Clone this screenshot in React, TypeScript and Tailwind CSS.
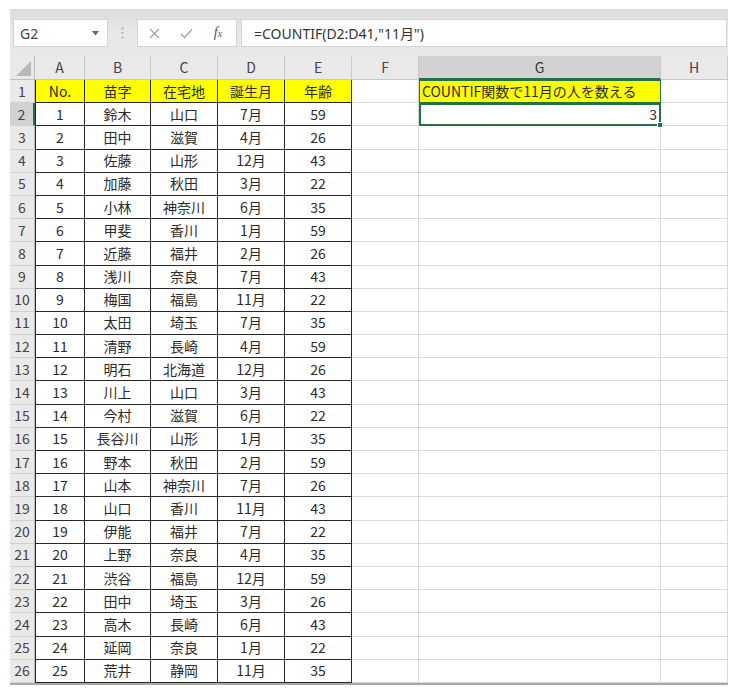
import React from "react";

const rows: [string, string, string, string, string][] = [
  ["1", "鈴木", "山口", "7月", "59"],
  ["2", "田中", "滋賀", "4月", "26"],
  ["3", "佐藤", "山形", "12月", "43"],
  ["4", "加藤", "秋田", "3月", "22"],
  ["5", "小林", "神奈川", "6月", "35"],
  ["6", "甲斐", "香川", "1月", "59"],
  ["7", "近藤", "福井", "2月", "26"],
  ["8", "浅川", "奈良", "7月", "43"],
  ["9", "梅国", "福島", "11月", "22"],
  ["10", "太田", "埼玉", "7月", "35"],
  ["11", "清野", "長崎", "4月", "59"],
  ["12", "明石", "北海道", "12月", "26"],
  ["13", "川上", "山口", "3月", "43"],
  ["14", "今村", "滋賀", "6月", "22"],
  ["15", "長谷川", "山形", "1月", "35"],
  ["16", "野本", "秋田", "2月", "59"],
  ["17", "山本", "神奈川", "7月", "26"],
  ["18", "山口", "香川", "11月", "43"],
  ["19", "伊能", "福井", "7月", "22"],
  ["20", "上野", "奈良", "4月", "35"],
  ["21", "渋谷", "福島", "12月", "59"],
  ["22", "田中", "埼玉", "3月", "26"],
  ["23", "高木", "長崎", "6月", "43"],
  ["24", "延岡", "奈良", "1月", "22"],
  ["25", "荒井", "静岡", "11月", "35"],
];

const widths = ["w-[50px]", "w-[66px]", "w-[67px]", "w-[67px]", "w-[67px]"];
const font = "font-['Noto_Sans_CJK_JP','Noto_Sans',sans-serif]";

function RowHeader({ n, active }: { n: number; active?: boolean }) {
  return (
    <div
      className={`w-[25px] shrink-0 flex items-center justify-center text-[14px] text-[#444] border-b border-[#d0d0d0] ${
        active ? "bg-[#d2d2d2] border-r-2 border-r-[#217346]" : "bg-[#e9e9e9] border-r border-r-[#bdbdbd]"
      }`}
    >
      {n}
    </div>
  );
}

function DataCell({ w, children, yellow, first }: { w: string; children: React.ReactNode; yellow?: boolean; first?: boolean }) {
  return (
    <div
      className={`${w} shrink-0 flex items-center justify-center border-r border-b border-[#262626] ${first ? "border-l" : ""} ${
        yellow ? "bg-[#ffff00]" : "bg-white"
      } text-[14px] text-[#2b2b2b]`}
    >
      {children}
    </div>
  );
}

function Empty({ w }: { w: string }) {
  return <div className={`${w} shrink-0 border-r border-b border-[#d9d9d9] bg-white`} />;
}

export default function App() {
  return (
    <div className={`w-[740px] h-[694px] bg-white ${font} overflow-hidden`}>
      <div className="h-[9px]" />
      <div className="ml-[10px] w-[718px]">
        {/* toolbar */}
        <div className="h-[47px] bg-gradient-to-b from-[#dcdcdc] via-[#e8e8e8] to-[#e8e8e8] flex items-center pl-[3px] pr-[1px] pt-[1px]">
          <div className="w-[95px] h-[28px] bg-white border border-[#d4d4d4] flex items-center justify-between pl-[6px] pr-[8px]">
            <span className="text-[14px] text-[#444] font-['Noto_Sans',sans-serif]">G2</span>
            <svg width="7" height="5" viewBox="0 0 7 5">
              <path d="M0 0 L7 0 L3.5 4.5 Z" fill="#666" />
            </svg>
          </div>
          <div className="w-[29px] flex justify-center">
            <svg width="3" height="12" viewBox="0 0 3 12">
              <circle cx="1.5" cy="1.5" r="1" fill="#a8a8a8" />
              <circle cx="1.5" cy="6" r="1" fill="#a8a8a8" />
              <circle cx="1.5" cy="10.5" r="1" fill="#a8a8a8" />
            </svg>
          </div>
          <div className="w-[100px] h-[28px] bg-white border border-[#d4d4d4] flex items-center">
            <div className="w-[32px] flex justify-center">
              <svg width="11" height="11" viewBox="0 0 11 11">
                <path d="M1 1 L10 10 M10 1 L1 10" stroke="#a0a0a0" strokeWidth="1.2" />
              </svg>
            </div>
            <div className="w-[32px] flex justify-center">
              <svg width="13" height="11" viewBox="0 0 13 11">
                <path d="M1 6 L4.5 9.5 L12 1.5" stroke="#a0a0a0" strokeWidth="1.3" fill="none" />
              </svg>
            </div>
            <div className="w-[32px] flex justify-center">
              <span className="font-['Liberation_Serif',serif] italic text-[14px] text-[#555] leading-none">
                f<span className="text-[10px]">x</span>
              </span>
            </div>
          </div>
          <div className="w-[4px]" />
          <div className="flex-1 h-[28px] bg-white border border-[#d4d4d4] flex items-center pl-[12px]">
            <span className="text-[14px] text-[#333] font-['Noto_Sans','Noto_Sans_CJK_JP',sans-serif]">=COUNTIF(D2:D41,"11月")</span>
          </div>
        </div>

        {/* column headers */}
        <div className="flex h-[24px] bg-[#e9e9e9]">
          <div className="w-[25px] shrink-0 border-r border-b border-[#bdbdbd] flex items-end justify-end pr-[3px] pb-[3px]">
            <svg width="15" height="15" viewBox="0 0 15 15">
              <path d="M15 0 L15 15 L0 15 Z" fill="#b9b9b9" />
            </svg>
          </div>
          {[
            ["A", "w-[50px]"],
            ["B", "w-[66px]"],
            ["C", "w-[67px]"],
            ["D", "w-[67px]"],
            ["E", "w-[67px]"],
            ["F", "w-[67px]"],
          ].map(([l, w]) => (
            <div key={l} className={`${w} shrink-0 flex items-center justify-center border-r border-b border-[#c8c8c8] text-[14px] text-[#444]`}>
              {l}
            </div>
          ))}
          <div className="w-[242px] shrink-0 flex items-center justify-center border-r border-[#c8c8c8] border-b-2 border-b-[#217346] bg-[#d2d2d2] text-[14px] text-[#333]">
            G
          </div>
          <div className="w-[67px] shrink-0 flex items-center justify-center border-r border-b border-[#c8c8c8] text-[14px] text-[#444]">
            H
          </div>
        </div>

        {/* row 1 */}
        <div className="flex h-[23.2px]">
          <RowHeader n={1} />
          {["No.", "苗字", "在宅地", "誕生月", "年齢"].map((t, i) => (
            <DataCell key={t} w={widths[i]} yellow first={i === 0}>
              {t}
            </DataCell>
          ))}
          <Empty w="w-[67px]" />
          <div className="w-[242px] shrink-0 bg-[#ffff00] border border-[#217346] flex items-center pl-[2px] text-[14px] text-[#2b2b2b] whitespace-nowrap">
            COUNTIF関数で11月の人を数える
          </div>
          <Empty w="w-[67px]" />
        </div>

        {/* data rows */}
        {rows.map((r, idx) => (
          <div key={idx} className="flex h-[23.2px]">
            <RowHeader n={idx + 2} active={idx === 0} />
            {r.map((t, i) => (
              <DataCell key={i} w={widths[i]} first={i === 0}>
                {t}
              </DataCell>
            ))}
            <Empty w="w-[67px]" />
            {idx === 0 ? (
              <div className="relative w-[242px] shrink-0 bg-white border-2 border-[#217346] flex items-center justify-end pr-[2px] text-[14px] text-[#2b2b2b]">
                3
                <div className="absolute -right-[4px] -bottom-[4px] w-[6px] h-[6px] bg-[#217346] border border-white" />
              </div>
            ) : (
              <Empty w="w-[242px]" />
            )}
            <Empty w="w-[67px]" />
          </div>
        ))}
        <div className="h-[2px] bg-[#a8a8a8]" />
      </div>
    </div>
  );
}
